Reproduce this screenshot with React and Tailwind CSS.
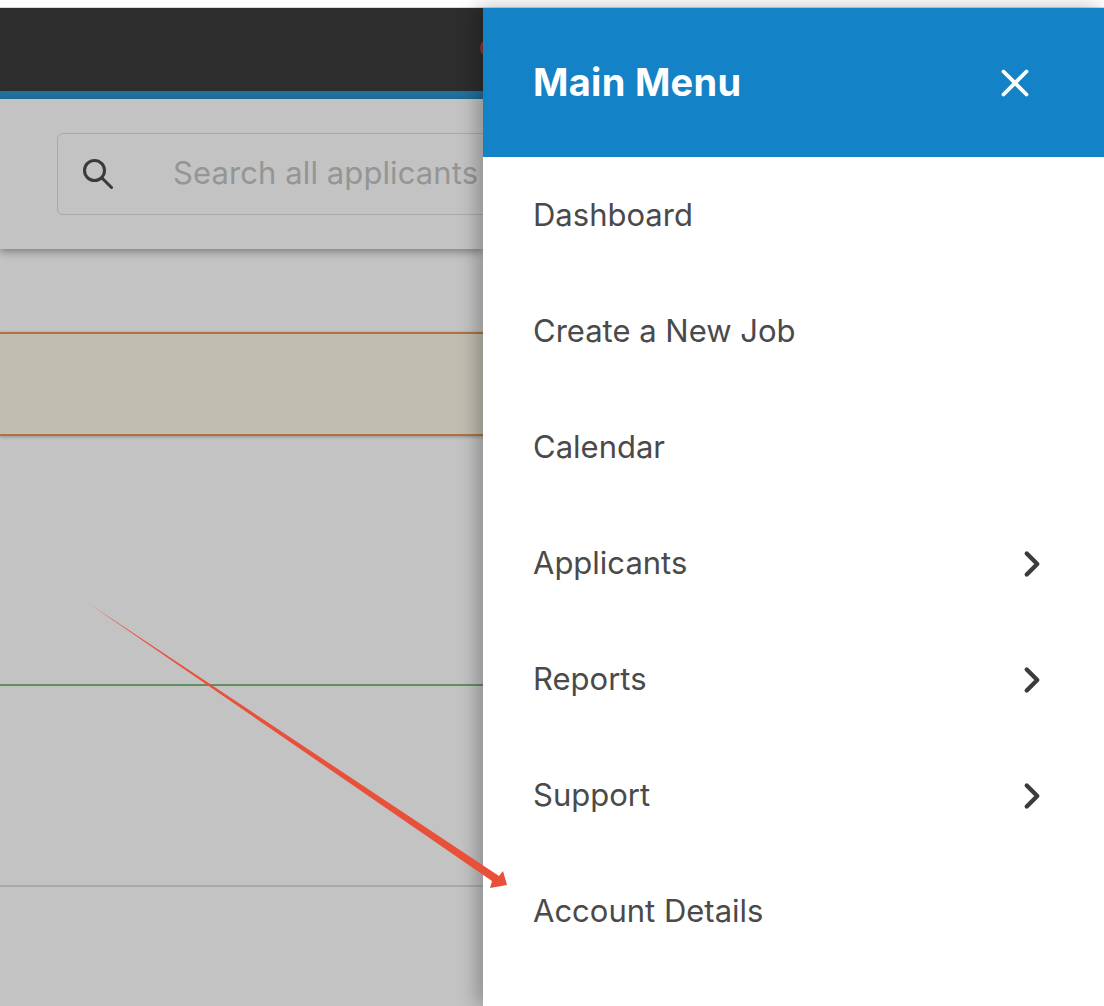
import { ChevronRight, X } from 'lucide-react';

const items = [
    { label: 'Dashboard' },
    { label: 'Create a New Job' },
    { label: 'Calendar' },
    { label: 'Applicants', sub: true },
    { label: 'Reports', sub: true },
    { label: 'Support', sub: true },
    { label: 'Account Details' },
];

const App = () => {
    return (
        <div className="relative h-[1006px] w-[1104px] overflow-hidden bg-white font-['Inter',sans-serif]">
            <div className="h-2 border-b border-[#d9d9d9]" />
            <div className="flex h-[998px]">
                {/* dimmed page behind the drawer */}
                <div className="relative w-[483px] shrink-0 overflow-hidden bg-[#c3c3c3]">
                    <div className="h-[83px] bg-[#2d2d2d]" />
                    <div className="h-2 bg-[#22719f]" />
                    <div className="h-[150px] bg-[#c3c3c3] pl-[57px] pt-[34px] shadow-[0_3px_8px_rgba(0,0,0,0.35)]">
                        <div className="flex h-[82px] w-[600px] items-center rounded-[6px] border border-[#a9a9a9] pl-[25px]">
                            <svg className="h-[30px] w-[30px]" viewBox="0 0 30 30" fill="none" stroke="#3a3a3a" strokeWidth="3" strokeLinecap="round">
                                <circle cx="11.5" cy="11.5" r="10" />
                                <path d="M19 19l9.5 9.5" />
                            </svg>
                            <span className="ml-[60px] pb-0.5 text-[31px] tracking-[0.1px] text-[#959595]">Search all applicants</span>
                        </div>
                    </div>
                    <div className="mt-[83px] h-[104px] border-y-2 border-[#ad7342] bg-[#c1bdb0] shadow-[0_1px_3px_rgba(0,0,0,0.25)]" />
                    <div className="mt-[248px] h-0.5 bg-[#5f9160]" />
                    <div className="mt-[199px] h-0.5 bg-[#a9a9a9]" />
                    {/* notification badge peeking out from under the drawer */}
                    <div className="absolute left-[480px] top-[30px] h-5 w-5 rounded-full bg-[#8a3b3f]" />
                </div>

                {/* drawer */}
                <div className="z-10 flex-1 bg-white shadow-[-6px_0_18px_rgba(0,0,0,0.28)]">
                    <div className="flex h-[149px] items-center justify-between bg-[#1482c6] pl-[50px] pr-[66px]">
                        <h1 className="text-[38px] font-bold tracking-[0.3px] text-white">Main Menu</h1>
                        <X className="h-[46px] w-[46px] text-white" strokeWidth={2} />
                    </div>
                    <div>
                        {items.map((item) => (
                            <div key={item.label} className="flex h-[116px] items-center justify-between pl-[50px] pr-[51px] text-[31px] text-[#4a4a4a]">
                                <span>{item.label}</span>
                                {item.sub && <ChevronRight className="mt-0.5 h-[42px] w-[42px] text-[#3c3c3c]" strokeWidth={2.5} />}
                            </div>
                        ))}
                    </div>
                </div>
            </div>

            {/* annotation arrow */}
            <svg className="pointer-events-none absolute left-0 top-0 z-20" width="1104" height="1006" viewBox="0 0 1104 1006">
                <polygon points="88,603 499,876 503,871 507,885 490,888 492,881" fill="#e8503a" />
            </svg>
        </div>
    );
};

export default App;
